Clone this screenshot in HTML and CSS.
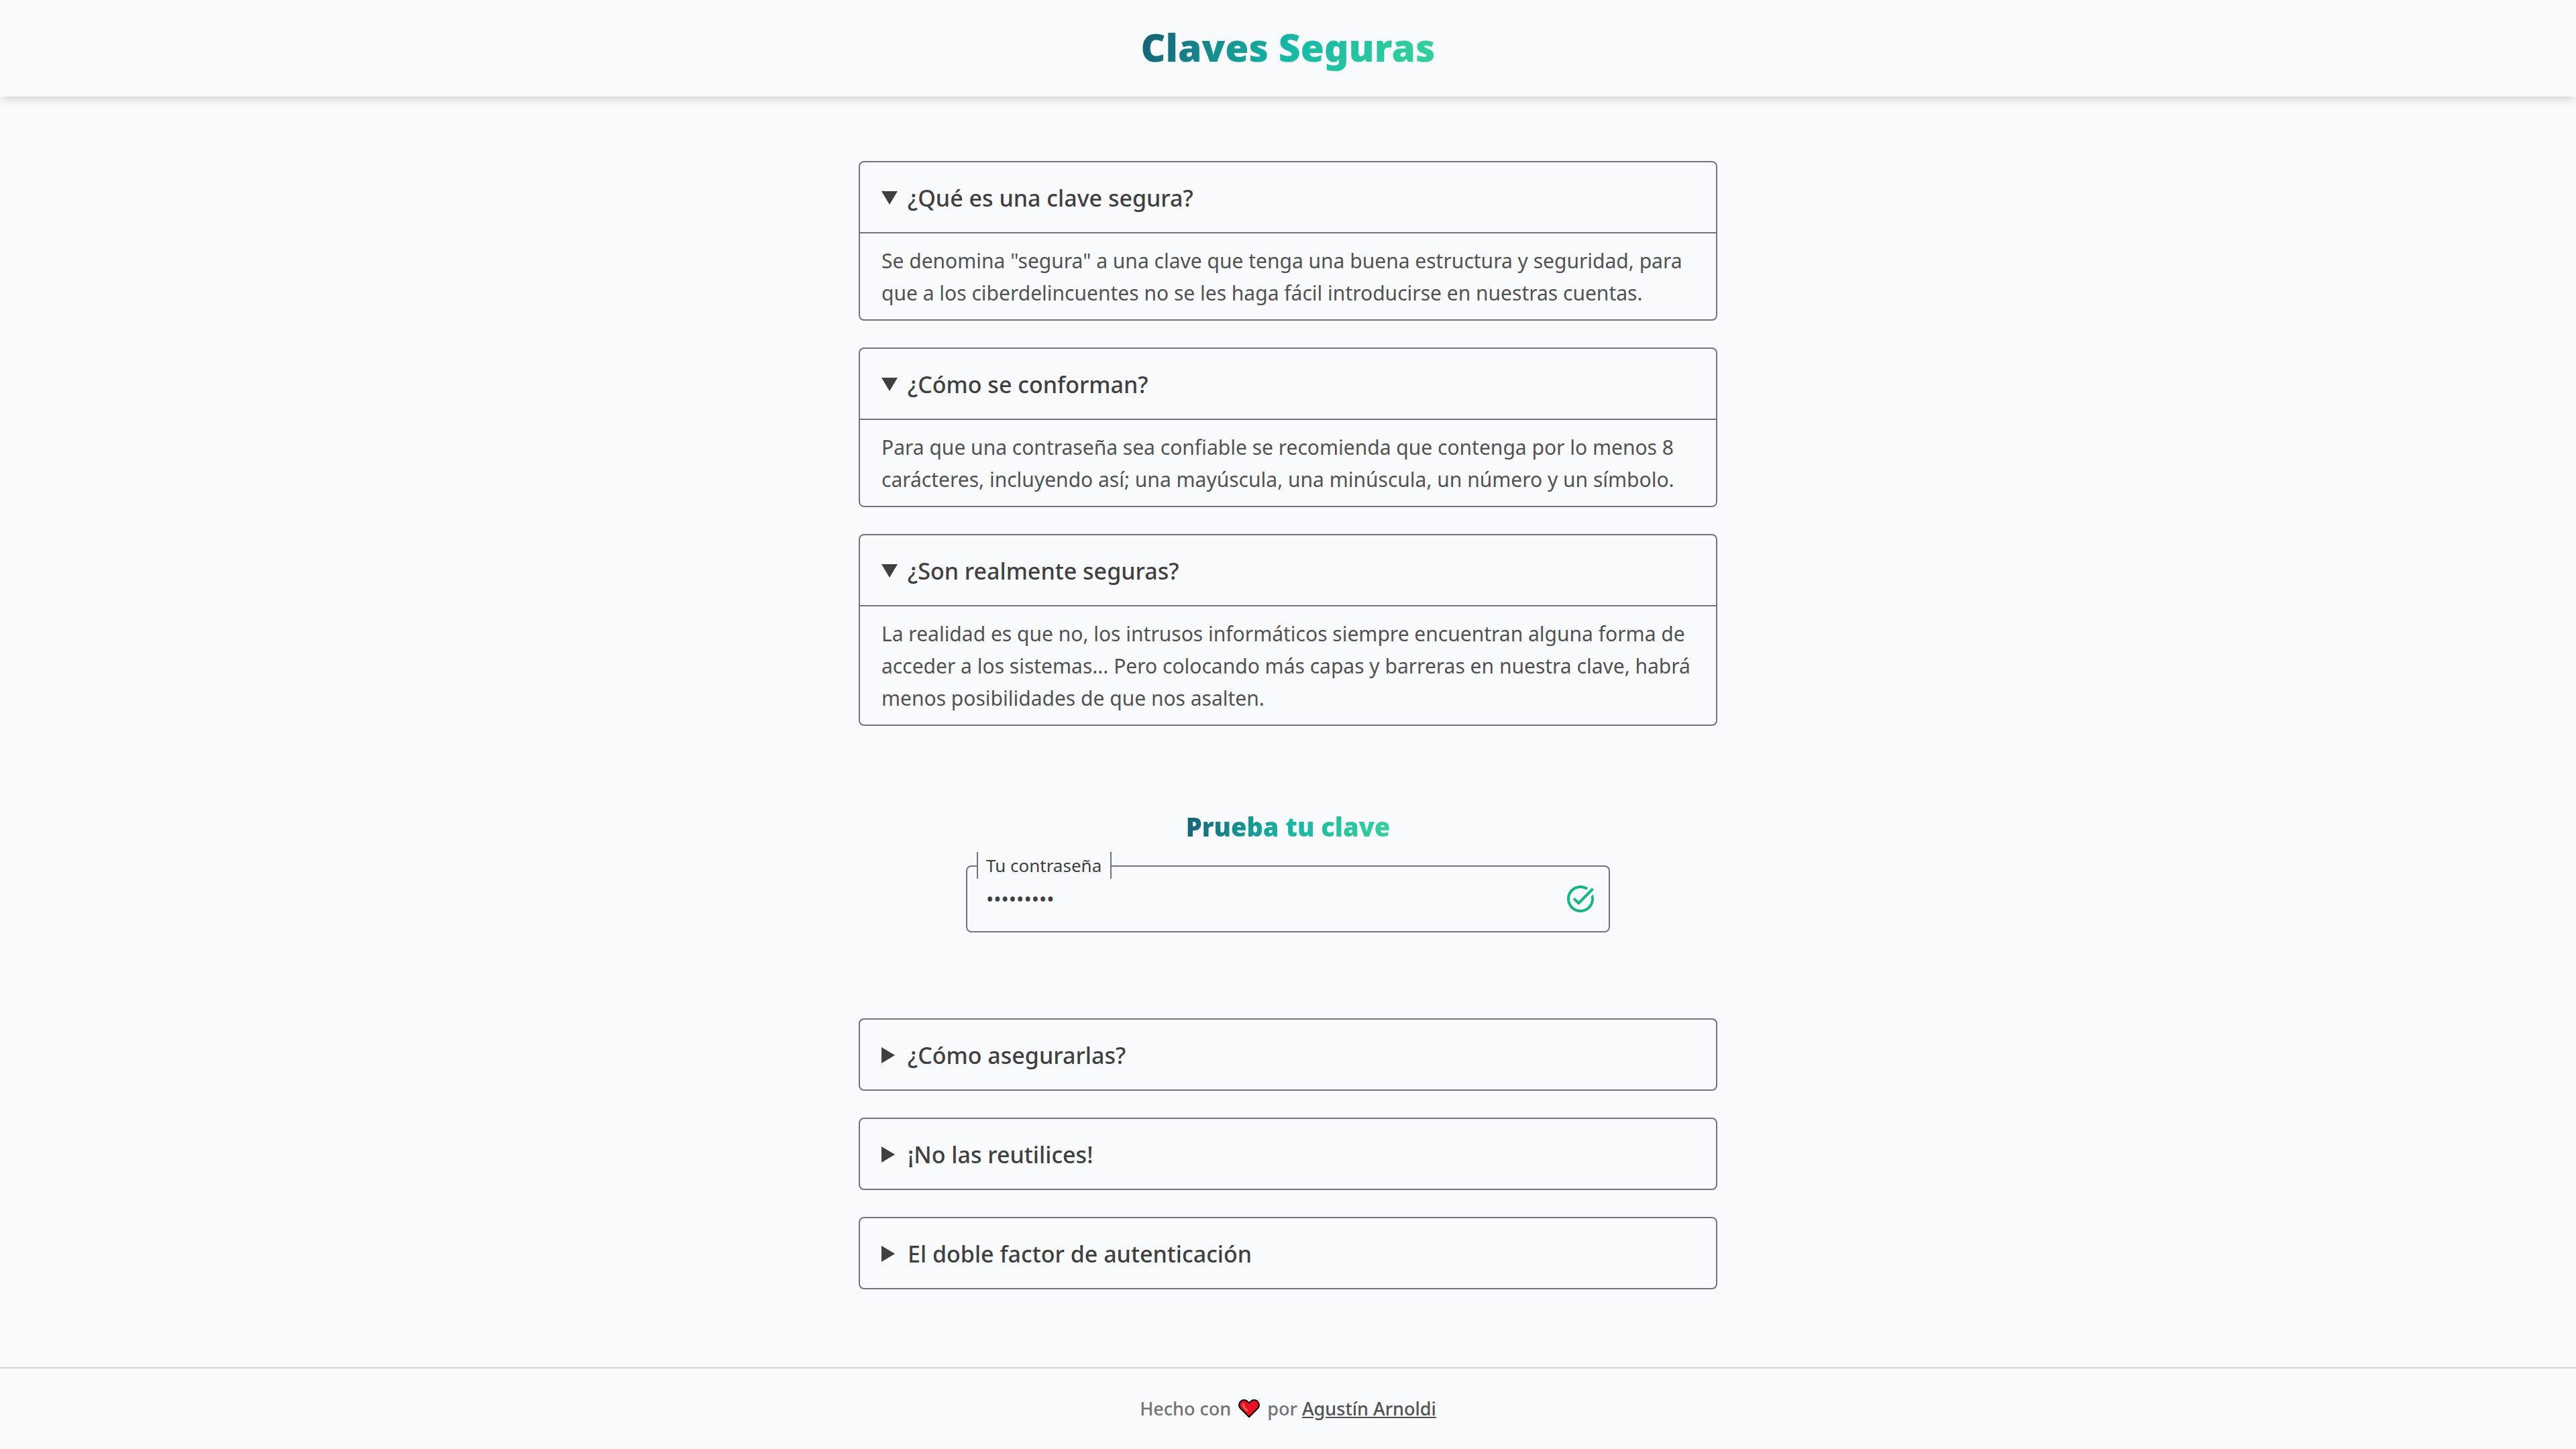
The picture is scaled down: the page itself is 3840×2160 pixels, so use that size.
FILE: index.html
```html
<!DOCTYPE html>
<html lang="es">
<head>
  <meta charset="utf-8">
  <meta name="viewport" content="width=device-width, initial-scale=1">
  <title>Claves Seguras</title>
  <link rel="stylesheet" href="styles.css">
</head>
<body>
  <header class="header">
    <h1 class="title gradient">Claves Seguras</h1>
  </header>

  <main class="main">
    <section class="cards">
      <details class="card" open>
        <summary class="question">¿Qué es una clave segura?</summary>
        <p class="answer">Se denomina "segura" a una clave que tenga una buena estructura y seguridad, para que a los ciberdelincuentes no se les haga fácil introducirse en nuestras cuentas.</p>
      </details>
      <details class="card" open>
        <summary class="question">¿Cómo se conforman?</summary>
        <p class="answer">Para que una contraseña sea confiable se recomienda que contenga por lo menos 8 carácteres, incluyendo así; una mayúscula, una minúscula, un número y un símbolo.</p>
      </details>
      <details class="card" open>
        <summary class="question">¿Son realmente seguras?</summary>
        <p class="answer">La realidad es que no, los intrusos informáticos siempre encuentran alguna forma de acceder a los sistemas... Pero colocando más capas y barreras en nuestra clave, habrá menos posibilidades de que nos asalten.</p>
      </details>
    </section>

    <section class="test">
      <h2 class="subtitle gradient">Prueba tu clave</h2>
      <form class="field">
        <label class="label" for="clave">Tu contraseña</label>
        <input class="input" id="clave" type="password" value="Segura#12" autocomplete="off">
        <svg class="check" viewBox="0 0 24 24" fill="currentColor" aria-hidden="true">
          <path d="M22 5.18 10.59 16.6l-4.24-4.24 1.41-1.41 2.83 2.83 10-10L22 5.18zM19.79 10.22c.13.57.21 1.17.21 1.78 0 4.42-3.58 8-8 8s-8-3.58-8-8 3.58-8 8-8c1.58 0 3.04.46 4.28 1.25l1.44-1.44A9.9 9.9 0 0 0 12 2C6.48 2 2 6.48 2 12s4.48 10 10 10 10-4.48 10-10c0-1.190-.22-2.330-.6-3.390l-1.610 1.610z"/>
        </svg>
      </form>
    </section>

    <section class="cards">
      <details class="card">
        <summary class="question">¿Cómo asegurarlas?</summary>
      </details>
      <details class="card">
        <summary class="question">¡No las reutilices!</summary>
      </details>
      <details class="card">
        <summary class="question">El doble factor de autenticación</summary>
      </details>
    </section>
  </main>

  <footer class="footer">
    <span>Hecho con</span>
    <svg class="heart" viewBox="0 0 32 30" role="img" aria-label="amor">
      <path d="M16 27.400 3.400 14.800C.3 11.700.3 7 3.200 4.100s7.600-2.900 10.500 0L16 6.400l2.300-2.300c2.900-2.900 7.600-2.900 10.500 0s2.900 7.600-.2 10.700z" fill="#e81224" stroke="#000" stroke-width="2"/>
      <path d="M7.500 8.200c-.4 3 .8 4.800 2.800 6.500l3 2.800" fill="none" stroke="#f4694d" stroke-width="2.600" stroke-linecap="round"/>
    </svg>
    <span>por <a class="link" href="#">Agustín Arnoldi</a></span>
  </footer>
</body>
</html>
```
FILE: styles.css
```css
*,
*::before,
*::after {
  box-sizing: border-box;
}

body {
  margin: 0;
  min-height: 100vh;
  display: flex;
  flex-direction: column;
  background: #f9fafc;
  color: #404040;
  font-family: "Segoe UI", "Noto Sans", sans-serif;
  font-size: 30px;
  line-height: 48px;
}

h1,
h2,
p {
  margin: 0;
}

.gradient {
  width: fit-content;
  background: linear-gradient(110deg, #155e75, #14b8a6, #34d399);
  background-clip: text;
  -webkit-background-clip: text;
  color: transparent;
  font-weight: 900;
}

.header {
  display: flex;
  justify-content: center;
  padding: 30px 32px 34px;
  box-shadow: 0 8px 12px -2px rgb(0 0 0 / 10%), 0 4px 8px -4px rgb(0 0 0 / 10%);
}

.title {
  font-size: 57px;
  line-height: 80px;
}

.main {
  flex: 1;
  display: flex;
  flex-direction: column;
  align-items: center;
  padding: 96px 32px;
}

.cards {
  display: flex;
  flex-direction: column;
  gap: 40px;
  width: 100%;
  max-width: 1280px;
}

.card {
  border: 2px solid #737477;
  border-radius: 8px;
}

.question {
  display: flex;
  align-items: center;
  gap: 15px;
  padding: 29px 32px 27px;
  font-size: 34px;
  font-weight: 500;
  line-height: 48px;
  cursor: pointer;
  list-style: none;
}

.question::before {
  content: "";
  width: 24px;
  height: 24px;
  background: currentColor;
  clip-path: polygon(0 0, 20px 50%, 0 100%);
}

.card[open] .question {
  border-bottom: 2px solid #737477;
}

.card[open] .question::before {
  clip-path: polygon(0 2px, 100% 2px, 50% 22px);
}

.answer {
  padding: 17px 32px 15px;
  color: #525252;
}

.test {
  display: flex;
  flex-direction: column;
  align-items: center;
  gap: 28px;
  width: 100%;
  max-width: 960px;
  padding: 120px 0 128px;
}

.subtitle {
  font-size: 38px;
  line-height: 60px;
}

.field {
  position: relative;
  width: 100%;
}

.label {
  position: absolute;
  top: -20px;
  left: 16px;
  padding: 0 13px 0 12px;
  border: solid #737477;
  border-width: 0 2px;
  background: #f9fafc;
  font-size: 26px;
  line-height: 40px;
}

.input {
  display: block;
  width: 100%;
  height: 100px;
  padding: 0 80px 0 28px;
  border: 2px solid #737477;
  border-radius: 8px;
  background: transparent;
  color: inherit;
  font: inherit;
}

.check {
  position: absolute;
  top: 26px;
  right: 20px;
  width: 48px;
  height: 48px;
  color: #10b981;
}

.footer {
  display: flex;
  justify-content: center;
  align-items: center;
  gap: 11px;
  padding: 36px 32px;
  border-top: 2px solid #d4d4d6;
  color: #737373;
  font-size: 27px;
  font-weight: 500;
}

.heart {
  width: 32px;
  height: 30px;
}

.link {
  color: #525252;
  text-decoration: underline;
}
```
